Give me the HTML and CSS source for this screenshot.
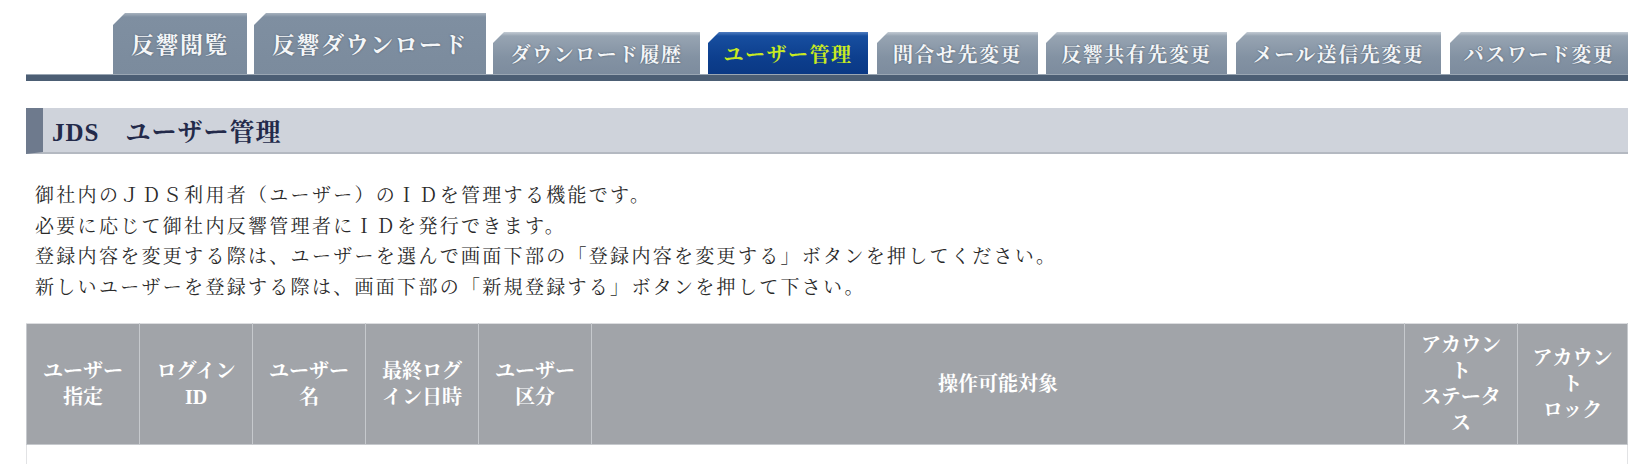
FILE: index.html
```html
<!DOCTYPE html>
<html lang="ja">
<head>
    <meta charset="UTF-8">
    <title>JDS ユーザー管理</title>
    <link rel="stylesheet" href="styles.css">
</head>
<body>
    <div class="page">
        <div class="tabnav">
            <ul class="tabs">
                <li class="tab tab-big tab-view">反響閲覧</li>
                <li class="tab tab-big tab-download">反響ダウンロード</li>
                <li class="tab tab-history">ダウンロード履歴</li>
                <li class="tab tab-user active">ユーザー管理</li>
                <li class="tab tab-contact">問合せ先変更</li>
                <li class="tab tab-share">反響共有先変更</li>
                <li class="tab tab-mail">メール送信先変更</li>
                <li class="tab tab-password">パスワード変更</li>
            </ul>
            <div class="tabbar"></div>
        </div>

        <h2 class="page-title">JDS　ユーザー管理</h2>

        <div class="intro">
            <p>御社内のＪＤＳ利用者（ユーザー）のＩＤを管理する機能です。</p>
            <p>必要に応じて御社内反響管理者にＩＤを発行できます。</p>
            <p>登録内容を変更する際は、ユーザーを選んで画面下部の「登録内容を変更する」ボタンを押してください。</p>
            <p>新しいユーザーを登録する際は、画面下部の「新規登録する」ボタンを押して下さい。</p>
        </div>

        <table class="user-table">
            <colgroup>
                <col class="col-s">
                <col class="col-s">
                <col class="col-s">
                <col class="col-s">
                <col class="col-s">
                <col>
                <col class="col-s">
                <col class="col-e">
            </colgroup>
            <thead>
                <tr>
                    <th>ユーザー<br>指定</th>
                    <th>ログイン<br>ID</th>
                    <th>ユーザー<br>名</th>
                    <th>最終ログ<br>イン日時</th>
                    <th>ユーザー<br>区分</th>
                    <th>操作可能対象</th>
                    <th>アカウント<br>ステータス</th>
                    <th>アカウント<br>ロック</th>
                </tr>
            </thead>
            <tbody>
                <tr>
                    <td></td><td></td><td></td><td></td><td></td><td></td><td></td><td></td>
                </tr>
            </tbody>
        </table>
    </div>
</body>
</html>
```

FILE: styles.css
```css
body {
    margin: 0;
    background-color: #fff;
    font-family: "Liberation Serif", "Noto Serif CJK JP", "Noto Sans CJK JP", serif;
    color: #333;
}
.page {
    width: 1602px;
    margin-left: 26px;
}

/* tab navigation */
.tabnav {
    padding-top: 13px;
}
.tabs {
    list-style: none;
    margin: 0 0 0 87px;
    padding: 0;
    display: flex;
    align-items: flex-end;
    height: 61px;
}
.tab {
    height: 42px;
    margin-left: 8px;
    display: flex;
    align-items: center;
    justify-content: center;
    font-size: 20px;
    font-weight: bold;
    letter-spacing: 1.5px;
    color: #f4f6f8;
    text-shadow: 0 0 2px #4a5868;
    background: linear-gradient(to bottom, #c3cbd4 0, #97a4b2 4px, #8392a3 60%, #7d8c9e 100%);
    clip-path: polygon(11px 0, 100% 0, 100% 100%, 0 100%, 0 11px);
    box-sizing: border-box;
}
.tab-big {
    height: 61px;
    font-size: 23px;
    letter-spacing: 1.5px;
    background: linear-gradient(to bottom, #a7b2be 0, #7f8fa1 4px, #7b8b9d 100%);
    clip-path: polygon(12px 0, 100% 0, 100% 100%, 0 100%, 0 12px);
}
.tab:first-child {
    margin-left: 0;
}
.tab.active {
    color: #c8ea22;
    text-shadow: none;
    background: linear-gradient(to bottom, #4f7cc0 0, #174e9f 4px, #0d3f8e 60%, #0a3884 100%);
}
.tab-view { width: 134px; }
.tab-download { width: 232px; margin-left: 7px; }
.tab-history { width: 207px; margin-left: 7px; }
.tab-user { width: 160px; }
.tab-contact { width: 161px; margin-left: 9px; }
.tab-share { width: 181px; }
.tab-mail { width: 205px; margin-left: 9px; }
.tab-password { width: 178px; margin-left: 9px; }

.tabbar {
    height: 6px;
    background-color: #4c5e74;
    border-top: 1px solid #9aa6b3;
}

/* page heading */
.page-title {
    margin: 27px 0 0;
    height: 46px;
    display: flex;
    align-items: center;
    box-sizing: border-box;
    padding-left: 9px;
    border-left: 17px solid #6e7a8d;
    border-bottom: 2px solid #b4b9c1;
    background-color: #cfd3db;
    font-size: 25px;
    letter-spacing: 1px;
    color: #232a4a;
}

.intro {
    margin-top: 27px;
    padding-left: 9px;
    font-size: 19px;
    letter-spacing: 2.3px;
    color: #2a2a2a;
}
.intro p {
    margin: 0;
    line-height: 30.5px;
}

/* user table */
.user-table {
    margin-top: 20px;
    width: 100%;
    border-collapse: collapse;
    table-layout: fixed;
}
.col-s { width: 113px; }
.col-e { width: 110px; }
.user-table th {
    height: 121px;
    padding: 0 8px;
    background-color: #a1a4a9;
    border: 1px solid #c6c9cd;
    border-top-color: #dcdde0;
    color: #fff;
    font-size: 20px;
    font-weight: bold;
    line-height: 26px;
    text-align: center;
    box-sizing: border-box;
}
.user-table td {
    height: 20px;
    border-bottom: 1px solid #e2e3e5;
}
.user-table td:first-child {
    border-left: 1px solid #e2e3e5;
}
.user-table td:last-child {
    border-right: 1px solid #e2e3e5;
}
```
